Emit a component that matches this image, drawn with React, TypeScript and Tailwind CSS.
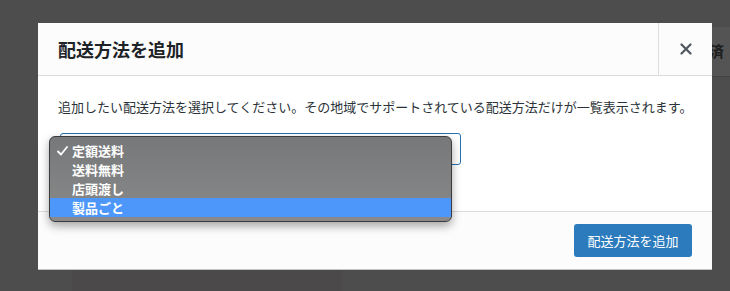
import React from "react";

const items = ["定額送料", "送料無料", "店頭渡し", "製品ごと"];

function CloseIcon() {
  return (
    <svg width="12" height="12" viewBox="0 0 12 12" fill="none">
      <path d="M1.5 1.5 L10.5 10.5 M10.5 1.5 L1.5 10.5" stroke="#50575e" strokeWidth="2.2" strokeLinecap="round" />
    </svg>
  );
}

function CheckIcon() {
  return (
    <svg width="11" height="10" viewBox="0 0 11 10" fill="none">
      <path d="M1 5.5 L4 8.5 L10 1" stroke="#ffffff" strokeWidth="1.8" strokeLinecap="round" strokeLinejoin="round" />
    </svg>
  );
}

function Dropdown() {
  return (
    <div className="absolute left-[-12px] top-[2px] w-[403px] rounded-[6px] border border-[#3c3c3c] bg-gradient-to-b from-[#76787a] to-[#8a8a8a] py-[4px] shadow-[0_4px_10px_rgba(0,0,0,0.35)]">
      {items.map((label, i) => (
        <div
          key={label}
          className={`flex h-[19px] items-center text-[13px] font-bold leading-none text-white ${i === 3 ? "bg-[#4d97fb]" : ""}`}
        >
          <span className="flex w-[22px] justify-center pl-[3px]">{i === 0 ? <CheckIcon /> : null}</span>
          <span>{label}</span>
        </div>
      ))}
    </div>
  );
}

export default function App() {
  return (
    <div
      className="relative h-[291px] w-[730px] overflow-hidden bg-[#4d4d4d]"
      style={{ fontFamily: '"Noto Sans CJK JP", "Noto Sans", sans-serif' }}
    >
      {/* page behind the overlay */}
      <div className="absolute left-[712px] top-[27px] flex h-[50px] w-[30px] items-center border-b border-[#444] bg-[#545454] text-[15px] font-bold text-[#1e1e1e]">
        <span className="-ml-[3px]">済</span>
      </div>
      <div className="absolute left-[72px] top-[268px] h-[30px] w-[270px] bg-[#4b494a]" />

      {/* modal */}
      <div className="absolute left-[38px] top-[23px] flex w-[674px] flex-col border-b border-[#c3c4c7] bg-white">
        <div className="flex h-[53px] border-b border-[#dcdcde] bg-[#fcfcfc]">
          <div className="flex flex-1 items-center pl-[20px] text-[18px] font-bold text-[#1d2327]">配送方法を追加</div>
          <div className="flex w-[54px] items-center justify-center border-l border-[#dcdcde]">
            <CloseIcon />
          </div>
        </div>
        <div className="flex flex-col px-[20px] pb-[46px] pt-[18px]">
          <p className="whitespace-nowrap text-[13px] leading-[26px] text-[#2c3338]">
            追加したい配送方法を選択してください。その地域でサポートされている配送方法だけが一覧表示されます。
          </p>
          <div className="relative ml-[2px] mt-[13px] h-[32px] w-[401px] rounded-[3px] border border-[#2271b1] bg-white">
            <Dropdown />
          </div>
        </div>
        <div className="flex h-[58px] items-center justify-end border-t border-[#dcdcde] bg-[#fcfcfc] pr-[20px]">
          <button className="h-[33px] w-[118px] rounded-[3px] bg-[#2c7bbd] text-[13px] text-white">配送方法を追加</button>
        </div>
      </div>
    </div>
  );
}
